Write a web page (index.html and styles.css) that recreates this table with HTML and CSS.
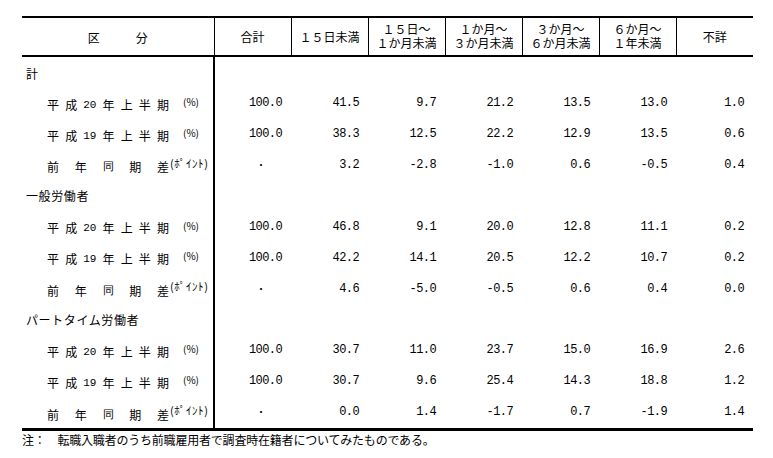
FILE: index.html
```html
<!DOCTYPE html>
<html lang="ja">
<head>
<meta charset="utf-8">
<title>転職入職者 前職離職期間</title>
<link rel="stylesheet" href="styles.css">
</head>
<body>
<div class="page">
<table class="tbl">
<colgroup>
<col class="c-lab"><col class="c-num"><col class="c-num"><col class="c-num"><col class="c-num"><col class="c-num"><col class="c-num"><col class="c-num">
</colgroup>
<thead>
<tr>
<th class="h-lab">区　　　分</th>
<th>合計</th>
<th>１５日未満</th>
<th><span class="l2">１５日～</span><span class="l2">１か月未満</span></th>
<th><span class="l2">１か月～</span><span class="l2">３か月未満</span></th>
<th><span class="l2">３か月～</span><span class="l2">６か月未満</span></th>
<th><span class="l2">６か月～</span><span class="l2">１年未満</span></th>
<th class="h-last">不詳</th>
</tr>
</thead>
<tbody>
<tr class="first"><td class="grp">計</td><td></td><td></td><td></td><td></td><td></td><td></td><td></td></tr>
<tr><td class="lab"><span class="just"><span>平</span><span>成</span><span>20</span><span>年</span><span>上</span><span>半</span><span>期</span></span><span class="pct">(%)</span></td><td>100.0</td><td>41.5</td><td>9.7</td><td>21.2</td><td>13.5</td><td>13.0</td><td>1.0</td></tr>
<tr><td class="lab"><span class="just"><span>平</span><span>成</span><span>19</span><span>年</span><span>上</span><span>半</span><span>期</span></span><span class="pct">(%)</span></td><td>100.0</td><td>38.3</td><td>12.5</td><td>22.2</td><td>12.9</td><td>13.5</td><td>0.6</td></tr>
<tr><td class="lab"><span class="just"><span>前</span><span>年</span><span>同</span><span>期</span><span>差</span></span><span class="pt">(ﾎﾟｲﾝﾄ)</span></td><td class="dot">・</td><td>3.2</td><td>-2.8</td><td>-1.0</td><td>0.6</td><td>-0.5</td><td>0.4</td></tr>
<tr><td class="grp">一般労働者</td><td></td><td></td><td></td><td></td><td></td><td></td><td></td></tr>
<tr><td class="lab"><span class="just"><span>平</span><span>成</span><span>20</span><span>年</span><span>上</span><span>半</span><span>期</span></span><span class="pct">(%)</span></td><td>100.0</td><td>46.8</td><td>9.1</td><td>20.0</td><td>12.8</td><td>11.1</td><td>0.2</td></tr>
<tr><td class="lab"><span class="just"><span>平</span><span>成</span><span>19</span><span>年</span><span>上</span><span>半</span><span>期</span></span><span class="pct">(%)</span></td><td>100.0</td><td>42.2</td><td>14.1</td><td>20.5</td><td>12.2</td><td>10.7</td><td>0.2</td></tr>
<tr><td class="lab"><span class="just"><span>前</span><span>年</span><span>同</span><span>期</span><span>差</span></span><span class="pt">(ﾎﾟｲﾝﾄ)</span></td><td class="dot">・</td><td>4.6</td><td>-5.0</td><td>-0.5</td><td>0.6</td><td>0.4</td><td>0.0</td></tr>
<tr><td class="grp">パートタイム労働者</td><td></td><td></td><td></td><td></td><td></td><td></td><td></td></tr>
<tr><td class="lab"><span class="just"><span>平</span><span>成</span><span>20</span><span>年</span><span>上</span><span>半</span><span>期</span></span><span class="pct">(%)</span></td><td>100.0</td><td>30.7</td><td>11.0</td><td>23.7</td><td>15.0</td><td>16.9</td><td>2.6</td></tr>
<tr><td class="lab"><span class="just"><span>平</span><span>成</span><span>19</span><span>年</span><span>上</span><span>半</span><span>期</span></span><span class="pct">(%)</span></td><td>100.0</td><td>30.7</td><td>9.6</td><td>25.4</td><td>14.3</td><td>18.8</td><td>1.2</td></tr>
<tr class="last"><td class="lab"><span class="just"><span>前</span><span>年</span><span>同</span><span>期</span><span>差</span></span><span class="pt">(ﾎﾟｲﾝﾄ)</span></td><td class="dot">・</td><td>0.0</td><td>1.4</td><td>-1.7</td><td>0.7</td><td>-1.9</td><td>1.4</td></tr>
</tbody>
</table>
<p class="note">注：　転職入職者のうち前職雇用者で調査時在籍者についてみたものである。</p>
</div>
</body>
</html>
```
FILE: styles.css
```css
html, body {
  margin: 0;
  padding: 0;
  background: #ffffff;
}

body {
  color: #000000;
  font-family: "Noto Sans CJK JP", "Noto Sans", sans-serif;
  font-size: 12px;
}

.page {
  padding: 16px 0 0 22px;
}

.tbl {
  border-collapse: collapse;
  table-layout: fixed;
  width: 731px;
}

.c-lab {
  width: 192px;
}

.c-num {
  width: 77px;
}

.tbl thead th {
  height: 35px;
  padding: 0;
  font-weight: normal;
  font-size: 12px;
  line-height: 14px;
  text-align: center;
  vertical-align: middle;
  border-top: 2px solid #000;
  border-bottom: 2px solid #000;
  border-left: 1px solid #000;
  white-space: nowrap;
}

.tbl thead th.h-lab {
  border-left: none;
  padding-top: 2px;
}

.l2 {
  display: block;
  height: 14px;
  line-height: 14px;
  font-family: "Liberation Sans", "Noto Sans CJK JP", sans-serif;
}

.tbl tbody td {
  height: 30.9px;
  padding: 0 9px 0 0;
  text-align: right;
  vertical-align: middle;
  font-family: "Liberation Mono", "DejaVu Sans Mono", monospace;
  font-size: 12px;
  letter-spacing: -0.6px;
  line-height: 12px;
  white-space: nowrap;
}

.tbl tbody tr.first td {
  height: 27.9px;
  padding-top: 3px;
}

.tbl tbody tr.last td {
  border-bottom: 3px solid #000;
}

.tbl tbody td:first-child {
  text-align: left;
  border-right: 2px solid #000;
  font-family: "Noto Sans CJK JP", "Noto Sans", sans-serif;
  font-size: 12px;
  letter-spacing: 0;
  padding-right: 0;
}

.tbl tbody td.grp {
  padding-left: 4px;
  letter-spacing: 0.6px;
}

.tbl tbody td.lab {
  padding-left: 25px;
}

.just {
  display: inline-flex;
  justify-content: space-between;
  width: 122px;
  vertical-align: middle;
}

.just span:nth-child(3) {
  font-family: "Liberation Mono", "DejaVu Sans Mono", monospace;
  font-size: 11px;
}

.pct {
  display: inline-block;
  margin-left: 14px;
  font-size: 10px;
  vertical-align: 2px;
}

.pt {
  display: inline-block;
  margin-left: 1px;
  font-size: 11px;
  letter-spacing: 0.6px;
  vertical-align: 3px;
}

.tbl tbody td.dot {
  text-align: center;
  padding: 0 0 0 16px;
  font-family: "Noto Sans CJK JP", sans-serif;
  font-size: 10px;
  letter-spacing: 0;
}

.note {
  margin: 2px 0 0 0;
  font-size: 12px;
  line-height: 14px;
  letter-spacing: -0.2px;
}
```
